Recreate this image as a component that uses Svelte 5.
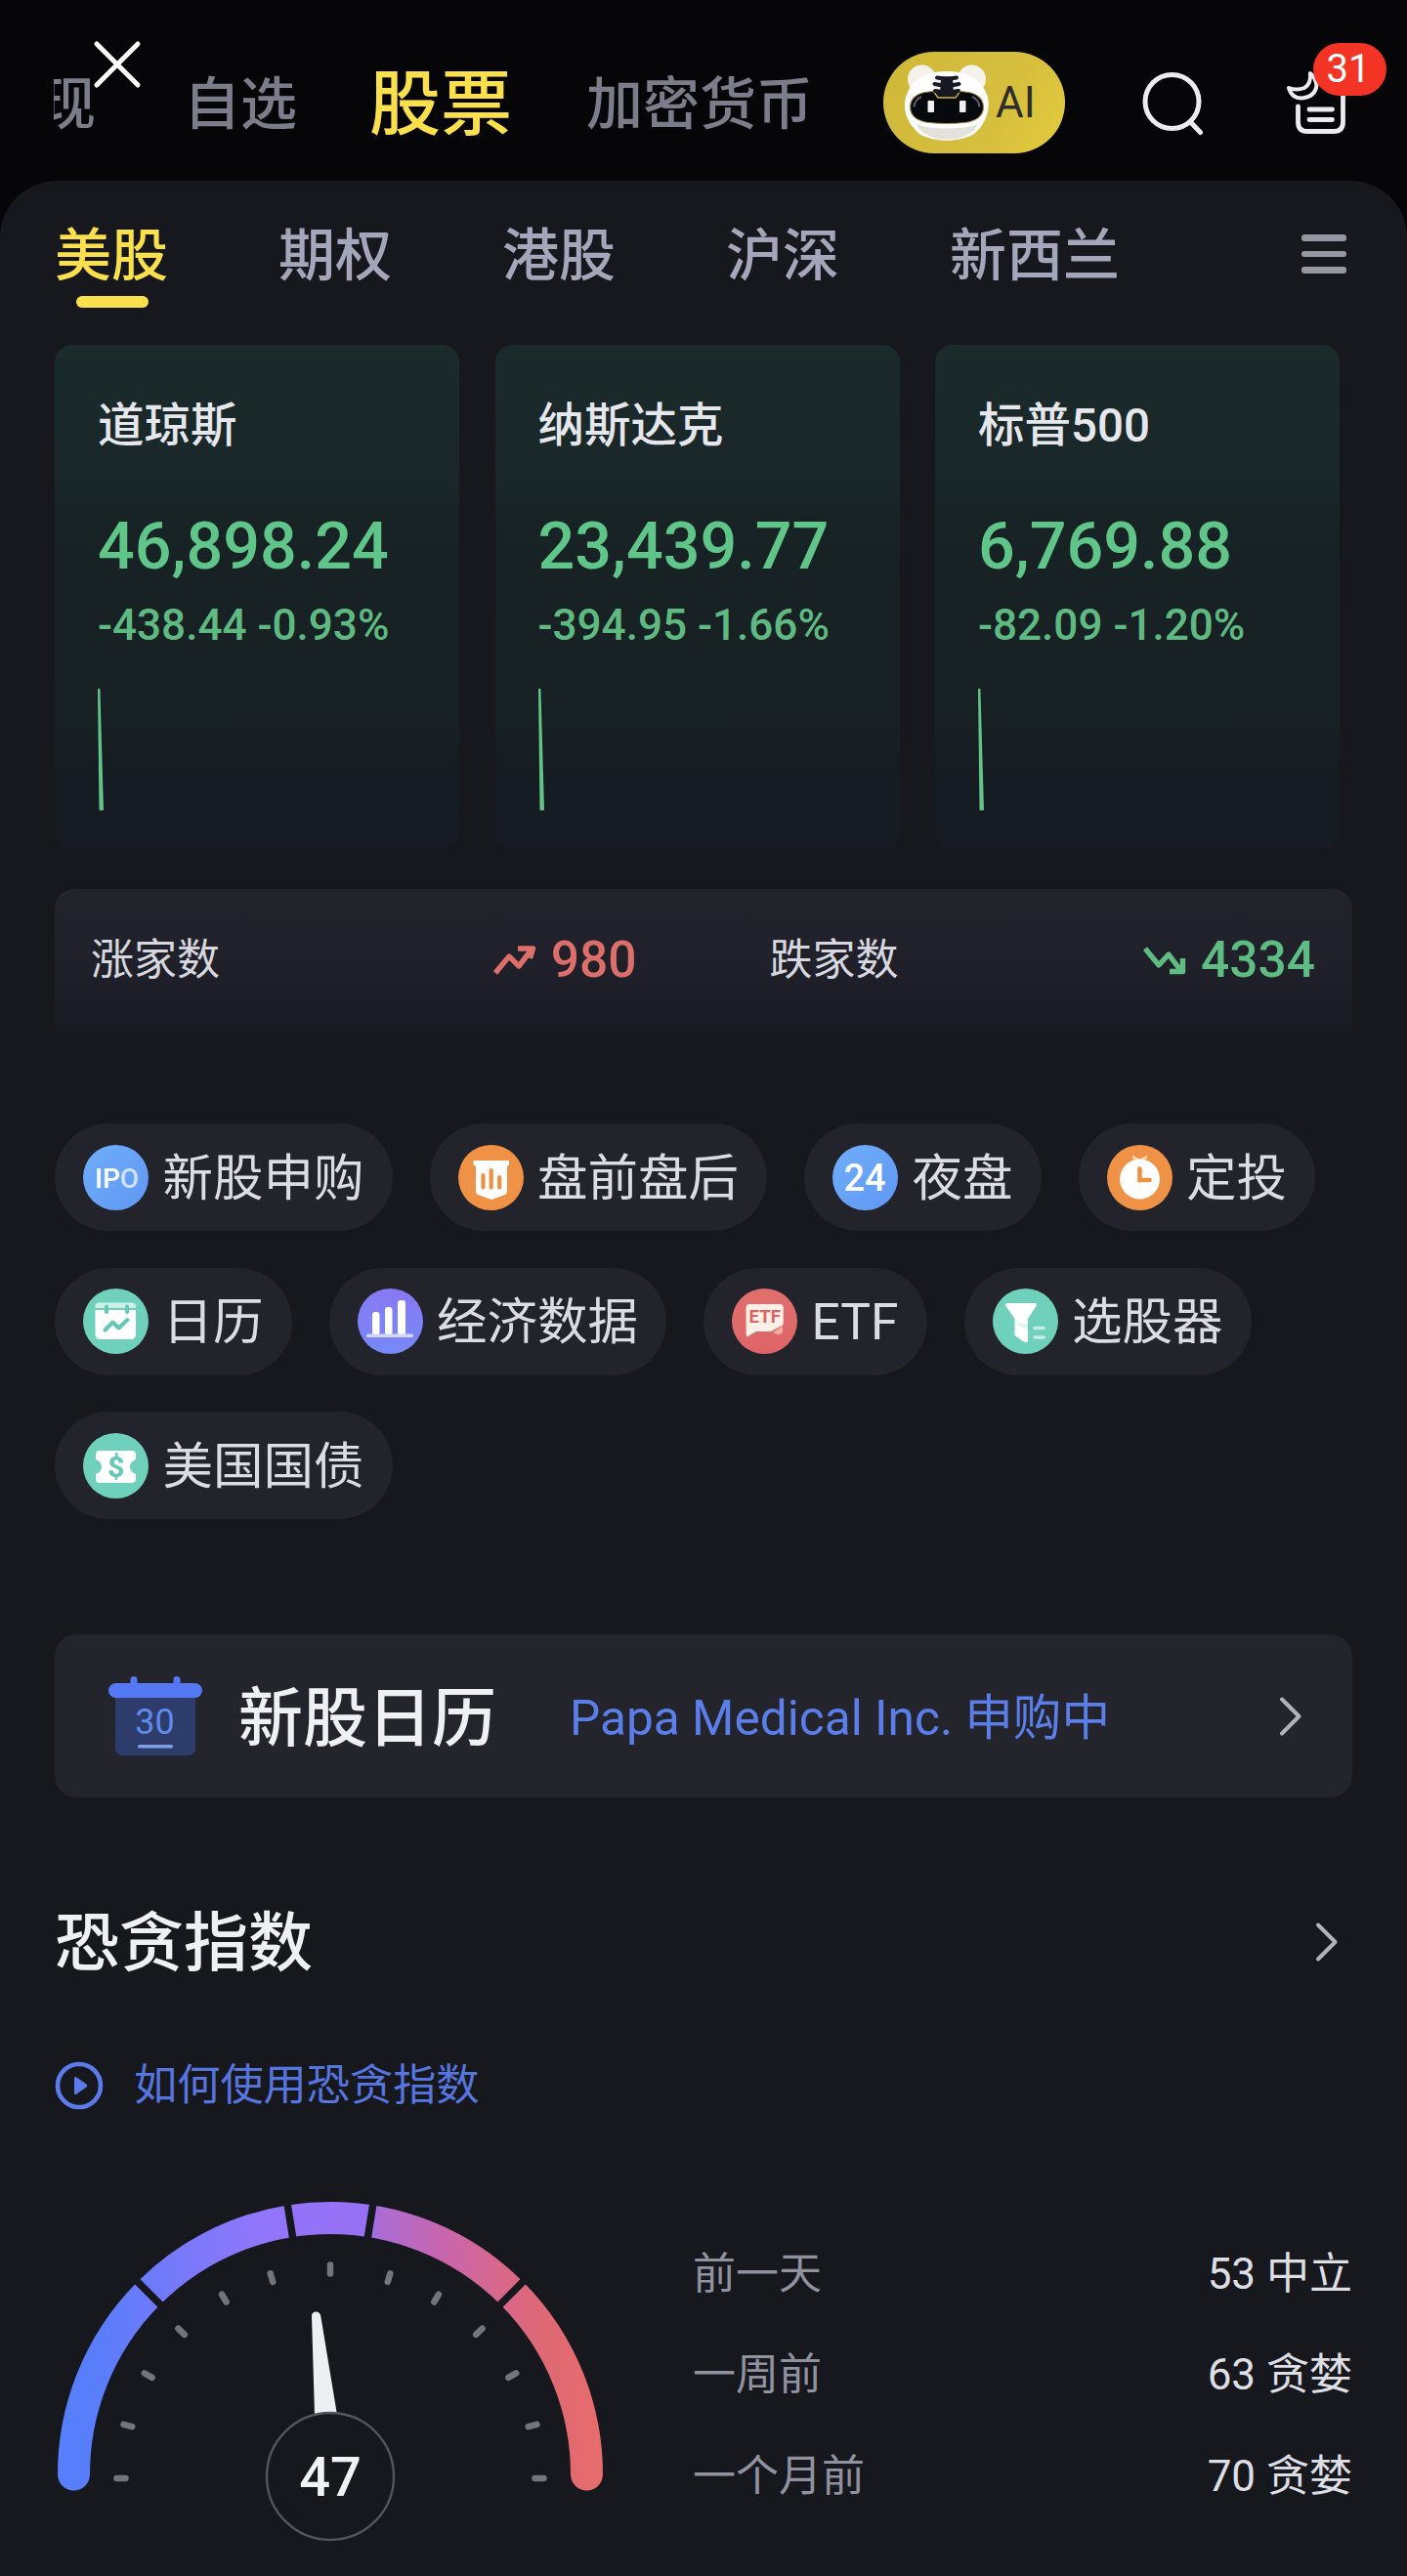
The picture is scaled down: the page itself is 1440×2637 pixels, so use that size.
<script>
  const indices = [
    { name: '道琼斯', value: '46,898.24', change: '-438.44 -0.93%' },
    { name: '纳斯达克', value: '23,439.77', change: '-394.95 -1.66%' },
    { name: '标普500', value: '6,769.88', change: '-82.09 -1.20%' }
  ];

  const tabs = ['美股', '期权', '港股', '沪深', '新西兰'];

  const chipRows = [
    [
      { icon: 'ipo', color: 'blue', label: '新股申购' },
      { icon: 'banner', color: 'orange', label: '盘前盘后' },
      { icon: 'night', color: 'blue', label: '夜盘' },
      { icon: 'clock', color: 'orange', label: '定投' }
    ],
    [
      { icon: 'calendar', color: 'teal', label: '日历' },
      { icon: 'bars', color: 'violet', label: '经济数据' },
      { icon: 'etf', color: 'red', label: 'ETF' },
      { icon: 'funnel', color: 'teal', label: '选股器' }
    ],
    [{ icon: 'bond', color: 'teal', label: '美国国债' }]
  ];

  const history = [
    { label: '前一天', value: '53 中立' },
    { label: '一周前', value: '63 贪婪' },
    { label: '一个月前', value: '70 贪婪' }
  ];

  const ticks = [-90, -75.4, -60.5, -45.4, -30.5, -16.3, 0, 16.3, 30.5, 45.4, 60.5, 75.4, 90];
  const gaps = [-45, -9, 9, 45];
</script>

{#snippet chevron()}
  <svg class="chevron" width="26" height="44" viewBox="0 0 26 44">
    <path d="M4 4.500L21.500 22L4 39.500" fill="none" stroke="#b2b3ba" stroke-width="4" stroke-linecap="round" stroke-linejoin="round" />
  </svg>
{/snippet}

{#snippet chipIcon(icon)}
  <svg width="67" height="67" viewBox="0 0 67 67">
    {#if icon === 'ipo'}
      <text x="12" y="43.500" font-size="28" font-weight="500" fill="#fff">IP<tspan fill="#cfe2ff">O</tspan></text>
    {:else if icon === 'banner'}
      <path d="M15.500 16H52V20.500L50 22V48Q50 50 48 51L34 56L20 51Q18 50 18 48V22L15.500 20.500Z" fill="#fff" />
      <path d="M25.500 31V43.500M33.700 26V43.500M42.200 33V43.500" stroke="#ee9044" stroke-width="4.200" stroke-linecap="round" />
    {:else if icon === 'night'}
      <text x="33" y="46.500" text-anchor="middle" font-size="38" font-weight="500" fill="#fff">24</text>
    {:else if icon === 'clock'}
      <path d="M26 10.500L33.500 14.500L41 10.500V14L35 17H32L26 14Z" fill="#ffd2ab" />
      <circle cx="33.500" cy="35" r="20.500" fill="#fff" />
      <path d="M33.500 24.500V36H43.500" fill="none" stroke="#ee9044" stroke-width="4.600" stroke-linecap="round" />
    {:else if icon === 'calendar'}
      <path d="M12.500 20V18Q12.500 14.500 16.500 14.500H50Q54 14.500 54 18V20Z" fill="#cdefe7" />
      <path d="M12.500 22H54V47Q54 52 49 52H17.500Q12.500 52 12.500 47Z" fill="#fff" />
      <path d="M24 18.500V24M45 18.500V24" stroke="#62c9b4" stroke-width="4" stroke-linecap="round" />
      <path d="M22.500 42.500L30.500 34.500L36.500 40.500L45.500 32" fill="none" stroke="#62c9b4" stroke-width="4" stroke-linecap="round" stroke-linejoin="round" />
    {:else if icon === 'bars'}
      <rect x="15" y="24" width="7.500" height="24" rx="3" fill="#fff" />
      <rect x="28" y="19" width="7.500" height="29" rx="3" fill="#fff" />
      <rect x="41" y="12" width="8" height="36" rx="3" fill="#fff" />
      <rect x="9" y="46.500" width="48" height="3.500" rx="1.700" fill="#d6d7ff" />
    {:else if icon === 'etf'}
      <path d="M18.500 16H49Q52.700 16 52.700 19.500V37L40 44H25L15.500 49.500Q14.600 49 14.600 46V19.500Q14.600 16 18.500 16Z" fill="#fff1ea" />
      <path d="M42 45L52 38V45L48 47.500Z" fill="#f0aaa0" />
      <text x="33.700" y="35" text-anchor="middle" font-size="18.500" font-weight="700" fill="#dc6260">ETF</text>
    {:else if icon === 'funnel'}
      <path d="M14.500 15H43.500Q45.500 15 44.500 18L36 31V53Q36 56.500 32.500 55L22.500 48V31L13.500 18Q12.500 15 14.500 15Z" fill="#fff" />
      <path d="M22.500 36H36V42L22.500 36Z" fill="#dff5f0" />
      <path d="M43 40.500H52M43 50H52.500" stroke="#c5ece4" stroke-width="3.600" stroke-linecap="round" />
    {:else if icon === 'bond'}
      <path d="M17 18H50Q54 18 54 22V27Q48 29 48 34.500Q48 40 54 42V47Q54 51 50 51H17Q13 51 13 47V42Q19 40 19 34.500Q19 29 13 27V22Q13 18 17 18Z" fill="#fff" />
      <text x="33.500" y="45" text-anchor="middle" font-size="30" font-weight="700" fill="#62c9b4">$</text>
    {/if}
  </svg>
{/snippet}

<div class="page">
  <header class="top">
    <div class="peek"><span>现</span></div>
    <span class="nav watch">自选</span>
    <span class="nav active">股票</span>
    <span class="nav crypto">加密货币</span>
    <button class="ai">
      <svg width="96" height="84" viewBox="922 64 96 84">
        <circle cx="943.500" cy="82" r="14.500" fill="#f4f2ea" />
        <circle cx="994.500" cy="82" r="14.500" fill="#f4f2ea" />
        <path d="M969 74C995 74 1007 86 1011 101C1014 114 1008 129 997 138C983 147 955 147 941 138C930 129 923 114 927 101C931 86 943 74 969 74Z" fill="#fff" />
        <path d="M938 128C952 134 986 134 1001 128C992 149 946 149 938 128Z" fill="#e3e1dc" />
        <path d="M950 95Q969 92 988 95C1000 96 1006.500 102 1006.500 110.500C1006.500 119 1000 125 988 126.500Q969 128.500 950 126.500C938 125 931.500 119 931.500 110.500C931.500 102 938 96 950 95Z" fill="#08090d" stroke="#a8935a" stroke-width="1.200" />
        <path d="M935.500 110.500Q936 103 943 100M1002.500 110.500Q1002 103 995 100" fill="none" stroke="#5b5d69" stroke-width="2" />
        <path d="M955 93L960 101H978L983 93Z" fill="#171923" />
        <path d="M955 94L960 101H978L983 94" fill="none" stroke="#cdb04e" stroke-width="1.300" />
        <path d="M963 79.500H975L976 99H962Z" fill="#171923" />
        <path d="M959 80.500Q969 82.500 979 80.500M956.500 87Q969 90 981.500 87M957 94Q969 96 981 94" fill="none" stroke="#171923" stroke-width="4" stroke-linecap="round" />
        <rect x="949.500" y="104" width="6.500" height="12" rx="1" fill="#f1f1f1" />
        <rect x="982" y="104" width="6.500" height="12" rx="1" fill="#f1f1f1" />
      </svg>
      <span>AI</span>
    </button>
    <svg class="search" width="66" height="68" viewBox="0 0 66 68">
      <circle cx="31.500" cy="33" r="27.500" fill="none" stroke="#ececf0" stroke-width="5" />
      <path d="M50.500 54L60.500 64.500" stroke="#ececf0" stroke-width="5" stroke-linecap="round" />
    </svg>
    <div class="inbox">
      <svg width="66" height="70" viewBox="1314 70 66 70">
        <path d="M1328.500 109V125Q1328.500 134.500 1338 134.500H1365Q1374.500 134.500 1374.500 125V96M1340 112H1363.500M1340 122.500H1363.500" fill="none" stroke="#ececf0" stroke-width="4.800" stroke-linecap="round" />
        <path d="M1341 75Q1342 86 1335 90Q1327 93 1319 90Q1322 100.500 1332 100.500Q1346.500 99 1347.500 87Q1346 79 1341 75Z" fill="none" stroke="#ececf0" stroke-width="4" stroke-linejoin="round" />
      </svg>
      <span class="badge">31</span>
    </div>
    <svg class="close" width="54" height="54" viewBox="0 0 54 54">
      <path d="M6 6L48 48M48 6L6 48" stroke="#fff" stroke-width="5" stroke-linecap="round" />
    </svg>
  </header>

  <main class="panel">
    <nav class="tabs">
      {#each tabs as tab, i}
        <span class="tab" class:selected={i === 0}>{tab}</span>
      {/each}
      <div class="menu"><i></i><i></i><i></i></div>
    </nav>

    <section class="cards">
      {#each indices as item}
        <article class="card">
          <div class="name">{item.name}</div>
          <div class="value">{item.value}</div>
          <div class="change">{item.change}</div>
          <svg width="10" height="126" viewBox="0 0 10 126">
            <path d="M0 0H2.400L6 124.500H1.500Z" fill="#62c488" />
          </svg>
        </article>
      {/each}
    </section>

    <section class="breadth">
      <div class="side up">
        <span>涨家数</span>
        <svg width="46" height="34" viewBox="0 0 46 34">
          <path d="M3 30L17 13L27 23L40 6M26 5H41.500L38.500 15" fill="none" stroke="#dc6f6a" stroke-width="5.400" stroke-linejoin="round" />
        </svg>
        <b>980</b>
      </div>
      <div class="side down">
        <span>跌家数</span>
        <svg width="46" height="34" viewBox="0 0 46 34">
          <path d="M3 5L17 22L27 11L39 27M28 28.500H41.500V15" fill="none" stroke="#5fbd84" stroke-width="5.400" stroke-linejoin="round" />
        </svg>
        <b>4334</b>
      </div>
    </section>

    <section class="chips">
      {#each chipRows as row}
        <div class="row">
          {#each row as chip}
            <div class="chip">
              <span class="dot {chip.color}">{@render chipIcon(chip.icon)}</span>
              <span class="label">{chip.label}</span>
            </div>
          {/each}
        </div>
      {/each}
    </section>

    <section class="ipo-card">
      <svg width="96" height="82" viewBox="111 1717 96 82">
        <rect x="118" y="1732" width="82" height="66" rx="7" fill="#2d3c6b" />
        <path d="M137 1720.500V1730M181 1720.500V1730" stroke="#5578f5" stroke-width="7" stroke-linecap="round" />
        <rect x="111" y="1724" width="96" height="15" rx="7.500" fill="#5578f5" />
        <text x="158.500" y="1776" text-anchor="middle" font-size="36" fill="#5f8aec">30</text>
        <rect x="141" y="1787" width="36" height="3.500" rx="1.500" fill="#7e9fe6" />
      </svg>
      <h2>新股日历</h2>
      <p>Papa Medical Inc. 申购中</p>
      {@render chevron()}
    </section>

    <section class="heading">
      <h2>恐贪指数</h2>
      {@render chevron()}
    </section>

    <div class="howto">
      <svg width="50" height="50" viewBox="0 0 50 50">
        <circle cx="25" cy="25" r="22" fill="none" stroke="#5b7bea" stroke-width="4.600" />
        <path d="M20 17.500V32.500Q20 35 22.500 33.500L32.500 26.500Q34 25 32.500 23.500L22.500 16.500Q20 15 20 17.500Z" fill="#5b7bea" />
      </svg>
      <span>如何使用恐贪指数</span>
    </div>

    <section class="sentiment">
      <svg class="gauge" width="566" height="360" viewBox="55 2250 566 360">
        <defs>
          <linearGradient id="arc" gradientUnits="userSpaceOnUse" x1="59" y1="0" x2="617" y2="0">
            <stop offset="0" stop-color="#557ffc" />
            <stop offset="0.080" stop-color="#5a7dfb" />
            <stop offset="0.200" stop-color="#727afa" />
            <stop offset="0.360" stop-color="#8f76fb" />
            <stop offset="0.570" stop-color="#9870f5" />
            <stop offset="0.590" stop-color="#ac6cd4" />
            <stop offset="0.700" stop-color="#c766b0" />
            <stop offset="0.830" stop-color="#da6785" />
            <stop offset="0.900" stop-color="#df6972" />
            <stop offset="1" stop-color="#e86c6c" />
          </linearGradient>
        </defs>
        <path d="M75.500 2533A262.500 262.500 0 0 1 600.500 2533" fill="none" stroke="url(#arc)" stroke-width="33" stroke-linecap="round" />
        {#each gaps as angle}
          <path d="M338 2250V2292" stroke="#16181d" stroke-width="7.500" transform="rotate({angle} 338 2533)" />
        {/each}
        {#each ticks as angle}
          <path d="M338 2318.500V2327.500" stroke="#73757b" stroke-width="6.500" stroke-linecap="round" transform="rotate({angle} 338 2537)" />
        {/each}
        <path d="M319 2371Q319 2366.500 323.500 2366.500Q327.500 2366.500 328.300 2371L345 2472H322Z" fill="#eeeff2" />
        <circle cx="338" cy="2535" r="65" fill="#16181d" stroke="#53555a" stroke-width="2.400" />
        <text x="338" y="2555" text-anchor="middle" font-size="56" font-weight="500" fill="#f1f2f5">47</text>
      </svg>
      <div class="history">
        {#each history as item}
          <div class="entry"><span>{item.label}</span><em>{item.value}</em></div>
        {/each}
      </div>
    </section>
  </main>
</div>

<style>
  :global(body) {
    margin: 0;
    background: #050507;
  }

  .page {
    width: 1440px;
    height: 2637px;
    overflow: hidden;
    background: #060608;
    color: #e6e7ec;
    font-family: Roboto, 'Noto Sans CJK SC', sans-serif;
    white-space: nowrap;
  }

  svg {
    display: block;
    flex: none;
  }

  h2,
  p {
    margin: 0;
  }

  .top {
    position: relative;
    box-sizing: border-box;
    display: flex;
    align-items: center;
    height: 185px;
    padding: 24px 0 0 55px;
    font-size: 58px;
    line-height: 80px;
    font-weight: 500;
    color: #7c7d8b;
  }

  .peek {
    display: flex;
    justify-content: flex-end;
    width: 43px;
    padding-top: 4px;
    overflow: hidden;
  }

  .nav {
    padding-top: 4px;
  }

  .watch {
    margin-left: 90px;
  }

  .active {
    margin-left: 74px;
    font-size: 73px;
    color: #fae04c;
  }

  .crypto {
    margin-left: 76px;
  }

  .ai {
    display: flex;
    align-items: center;
    width: 186px;
    height: 104px;
    margin-left: 72px;
    padding: 0 0 0 18px;
    gap: 1px;
    border: 0;
    border-radius: 52px;
    background: linear-gradient(120deg, #cfb737, #d6be3e 60%, #e3cb3e);
    color: #2e2d2b;
    font: 400 44px/60px Roboto, sans-serif;
  }

  .search {
    margin-left: 78px;
  }

  .inbox {
    position: relative;
    margin-left: 80px;
  }

  .badge {
    position: absolute;
    left: 30px;
    top: -26px;
    box-sizing: border-box;
    width: 75px;
    height: 54px;
    padding-right: 3px;
    border-radius: 27px;
    background: #f33425;
    color: #fff;
    font-size: 40px;
    font-weight: 400;
    line-height: 54px;
    text-align: center;
  }

  .close {
    position: absolute;
    left: 93px;
    top: 39px;
  }

  .panel {
    box-sizing: border-box;
    display: flex;
    flex-direction: column;
    height: 2452px;
    padding: 0 56px;
    border-radius: 58px 58px 0 0;
    background: #16181d;
  }

  .tabs {
    display: flex;
    align-items: center;
    gap: 113px;
    height: 150px;
    font-size: 58px;
    line-height: 80px;
    font-weight: 500;
    color: #a4a6ba;
  }

  .tab {
    padding-top: 4px;
  }

  .tab.selected {
    position: relative;
    color: #fae04c;
  }

  .selected::after {
    content: '';
    position: absolute;
    left: 22px;
    bottom: -13px;
    width: 74px;
    height: 12px;
    border-radius: 6px;
    background: #fae04c;
  }

  .menu {
    display: grid;
    gap: 10px;
    margin-left: auto;
    margin-right: 6px;
  }

  .menu i {
    width: 46px;
    height: 6.500px;
    border-radius: 3px;
    background: #9697a2;
  }

  .cards {
    display: flex;
    gap: 36.500px;
    margin-top: 18px;
  }

  .card {
    box-sizing: border-box;
    width: 414px;
    height: 516px;
    padding: 48px 0 0 44px;
    border-radius: 18px;
    background: linear-gradient(#1b2a2a, #19272a 28%, #182325 32%, #172022 75%, #161c23 86%, #161b24);
  }

  .name {
    font-size: 47.500px;
    font-weight: 500;
    line-height: 70px;
  }

  .value {
    margin-top: 48px;
    font-size: 66.500px;
    font-weight: 500;
    line-height: 80px;
    color: #60c589;
  }

  .change {
    margin-top: 11px;
    font-size: 44.100px;
    font-weight: 500;
    line-height: 60px;
    color: #5fba82;
  }

  .card svg {
    margin-top: 35px;
  }

  .breadth {
    box-sizing: border-box;
    display: flex;
    gap: 136px;
    height: 146px;
    margin-top: 41px;
    padding: 0 38px 0 37px;
    border-radius: 20px 20px 0 0;
    background: linear-gradient(#22232b, #1f2029 55%, #191a23);
    font-size: 44px;
    line-height: 60px;
    color: #d6d7df;
  }

  .side {
    display: flex;
    align-items: center;
    flex: 1;
  }

  .side svg {
    margin-left: auto;
  }

  .side b {
    margin-left: 14px;
    font-size: 51.500px;
    font-weight: 500;
  }

  .up b {
    color: #dc6f6a;
  }

  .down b {
    color: #5fbd84;
  }

  .chips {
    display: grid;
    gap: 37.500px;
    margin-top: 94px;
  }

  .row {
    display: flex;
    gap: 38px;
  }

  .chip {
    display: flex;
    align-items: center;
    gap: 14.500px;
    height: 110px;
    padding: 0 29px;
    border-radius: 55px;
    background: #22232b;
    font-size: 51.500px;
    line-height: 70px;
    color: #dcdde4;
  }

  .label {
    padding-top: 3px;
  }

  .dot {
    border-radius: 50%;
  }

  .blue {
    background: linear-gradient(135deg, #70aefa, #5f97f3);
  }

  .orange {
    background: #ef9246;
  }

  .teal {
    background: #6fd0bc;
  }

  .violet {
    background: linear-gradient(#8779f5, #7789f6);
  }

  .red {
    background: linear-gradient(#e0706c, #df6468);
  }

  .ipo-card {
    box-sizing: border-box;
    display: flex;
    align-items: center;
    height: 167px;
    margin-top: 118px;
    padding: 0 50px 0 55px;
    border-radius: 22px;
    background: #23242c;
  }

  h2 {
    padding-top: 6px;
    font-size: 66px;
    font-weight: 500;
    line-height: 90px;
    color: #eff0f3;
  }

  .ipo-card h2 {
    margin-left: 37px;
  }

  .ipo-card p {
    margin-left: 75px;
    padding-top: 5px;
    font-size: 49.600px;
    line-height: 70px;
    color: #5b7ee9;
  }

  .chevron {
    margin-left: auto;
  }

  .heading {
    display: flex;
    align-items: center;
    height: 90px;
    margin-top: 103px;
    padding-right: 13px;
  }

  .heading h2 {
    padding-top: 3px;
  }

  .howto {
    display: flex;
    align-items: center;
    gap: 31px;
    height: 60px;
    margin-top: 72px;
    font-size: 44.200px;
    line-height: 60px;
    color: #5675df;
  }

  .sentiment {
    display: flex;
    margin-top: 85px;
  }

  .gauge {
    margin-left: -1px;
  }

  .history {
    display: flex;
    flex-direction: column;
    flex: 1;
    gap: 43.400px;
    margin-left: 88px;
    padding-top: 48px;
  }

  .entry {
    display: flex;
    justify-content: space-between;
    font-size: 44px;
    line-height: 60px;
    color: #9192a0;
  }

  .entry em {
    font-style: normal;
    color: #dedfe5;
  }
</style>
